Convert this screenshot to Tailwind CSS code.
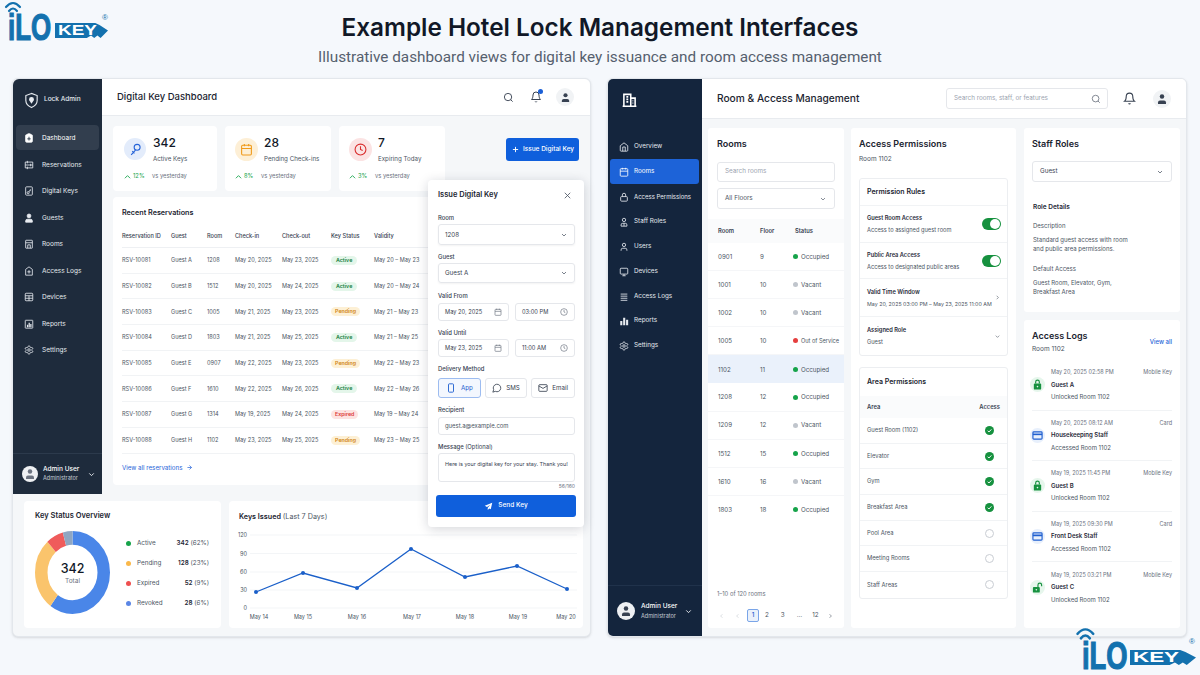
<!DOCTYPE html>
<html lang="en"><head><meta charset="utf-8"><title>Example Hotel Lock Management Interfaces</title>
<script src="https://cdn.jsdelivr.net/npm/@tailwindcss/browser@4"></script></head>
<body class="font-[Inter,sans-serif]">
<svg width="0" height="0" class="absolute"><defs>
<symbol id="search" viewBox="0 0 24 24"><circle cx="11" cy="11" r="8"/><path d="m21 21-4.3-4.3"/></symbol>
<symbol id="bell" viewBox="0 0 24 24"><path d="M6 8a6 6 0 0 1 12 0c0 7 3 9 3 9H3s3-2 3-9"/><path d="M10.3 21a1.94 1.94 0 0 0 3.4 0"/></symbol>
<symbol id="user" viewBox="0 0 24 24"><path d="M19 21v-2a4 4 0 0 0-4-4H9a4 4 0 0 0-4 4v2"/><circle cx="12" cy="7" r="4"/></symbol>
<symbol id="userfill" viewBox="0 0 24 24"><path fill="currentColor" d="M20 22v-3a4 4 0 0 0-4-4H8a4 4 0 0 0-4 4v3z"/><circle fill="currentColor" cx="12" cy="7" r="4.500"/></symbol>
<symbol id="users" viewBox="0 0 24 24"><circle cx="12" cy="7" r="4"/><path d="M5 22v-3a4 4 0 0 1 4-4h6a4 4 0 0 1 4 4v3zM12 15v7"/></symbol>
<symbol id="down" viewBox="0 0 24 24"><path d="m6 9 6 6 6-6"/></symbol>
<symbol id="right" viewBox="0 0 24 24"><path d="m9 18 6-6-6-6"/></symbol>
<symbol id="left" viewBox="0 0 24 24"><path d="m15 18-6-6 6-6"/></symbol>
<symbol id="cal" viewBox="0 0 24 24"><rect x="3" y="4" width="18" height="18" rx="2"/><path d="M16 2v4M8 2v4M3 10h18"/></symbol>
<symbol id="calrows" viewBox="0 0 24 24"><path d="M3 5h18M3 12h18M3 19h18M8 2v6M16 9v6M8 16v6M3 5v14M21 5v14"/></symbol>
<symbol id="clock" viewBox="0 0 24 24"><circle cx="12" cy="12" r="10"/><path d="M12 6v6l4 2"/></symbol>
<symbol id="home" viewBox="0 0 24 24"><path d="m3 9 9-7 9 7v11a2 2 0 0 1-2 2H5a2 2 0 0 1-2-2z"/><path d="M9 22V12h6v10"/></symbol>
<symbol id="clip" viewBox="0 0 24 24"><rect x="4" y="4" width="16" height="18" rx="2" fill="currentColor"/><path d="M9 2h6v4H9z" fill="currentColor"/><path stroke="#1e2b3c" d="M12 9v9M8 14h8"/></symbol>
<symbol id="keyup" viewBox="0 0 24 24"><circle cx="15" cy="8" r="5.500"/><path d="M12 13 4 22M6 15l4 4"/></symbol>
<symbol id="keycard" viewBox="0 0 24 24"><rect x="4" y="2" width="16" height="20" rx="2"/><circle cx="10" cy="16" r="2.500"/><path d="m12 14 4-6M14 10l2 1.500"/></symbol>
<symbol id="door" viewBox="0 0 24 24"><rect x="4" y="3" width="16" height="19" rx="1"/><path d="M4 9h16M9 22v-8h6v8"/></symbol>
<symbol id="shieldstar" viewBox="0 0 24 24"><path d="M12 2 4 8v14h16V8z"/><path d="M12 10v8M8 14h8"/></symbol>
<symbol id="grid" viewBox="0 0 24 24"><rect x="3" y="3" width="18" height="18" rx="2"/><path d="M3 9h18M3 15h18M12 9v12"/></symbol>
<symbol id="log" viewBox="0 0 24 24"><path d="M4 5h16M4 10h16M4 15h16M4 20h16"/></symbol>
<symbol id="device" viewBox="0 0 24 24"><rect x="3" y="3" width="18" height="14" rx="2"/><path d="M12 17v4M8 21h8"/></symbol>
<symbol id="bars" viewBox="0 0 24 24"><path stroke="none" fill="currentColor" d="M3 12h5v10H3zM10 4h5v18h-5zM17 9h5v13h-5z"/></symbol>
<symbol id="reportbox" viewBox="0 0 24 24"><rect x="3" y="3" width="18" height="19" rx="1"/><path stroke="none" fill="currentColor" d="M7 14h3v6H7zM11 9h3v11h-3zM15 12h3v8h-3z"/></symbol>
<symbol id="gear" viewBox="0 0 24 24"><path d="M12.22 2h-.44a2 2 0 0 0-2 2v.18a2 2 0 0 1-1 1.73l-.43.25a2 2 0 0 1-2 0l-.15-.08a2 2 0 0 0-2.73.73l-.22.38a2 2 0 0 0 .73 2.73l.15.1a2 2 0 0 1 1 1.72v.51a2 2 0 0 1-1 1.74l-.15.09a2 2 0 0 0-.73 2.73l.22.38a2 2 0 0 0 2.73.73l.15-.08a2 2 0 0 1 2 0l.43.25a2 2 0 0 1 1 1.73V20a2 2 0 0 0 2 2h.44a2 2 0 0 0 2-2v-.18a2 2 0 0 1 1-1.73l.43-.25a2 2 0 0 1 2 0l.15.08a2 2 0 0 0 2.73-.73l.22-.39a2 2 0 0 0-.73-2.73l-.15-.08a2 2 0 0 1-1-1.74v-.5a2 2 0 0 1 1-1.74l.15-.09a2 2 0 0 0 .73-2.73l-.22-.38a2 2 0 0 0-2.73-.73l-.15.08a2 2 0 0 1-2 0l-.43-.25a2 2 0 0 1-1-1.73V4a2 2 0 0 0-2-2z"/><circle cx="12" cy="12" r="3"/></symbol>
<symbol id="lock" viewBox="0 0 24 24"><rect x="4" y="11" width="16" height="11" rx="2"/><path d="M8 11V7a4 4 0 0 1 8 0v4"/></symbol>
<symbol id="lockfill" viewBox="0 0 24 24"><rect x="4" y="10" width="16" height="13" rx="2" fill="currentColor"/><path d="M8 10V6.500a4 4 0 0 1 8 0V10" fill="none" stroke="currentColor" stroke-width="2.500"/><circle cx="12" cy="16.500" r="1.800" fill="#e6f6ec"/></symbol>
<symbol id="lockopen" viewBox="0 0 24 24"><rect x="2" y="11" width="15" height="12" rx="2" fill="currentColor"/><path d="M13 11V6.500a4 4 0 0 1 8 0V9" fill="none" stroke="currentColor" stroke-width="2.500"/><circle cx="9.500" cy="17" r="1.800" fill="#e6f6ec"/></symbol>
<symbol id="cardicon" viewBox="0 0 24 24"><rect x="2" y="4" width="20" height="16" rx="2" fill="none" stroke="currentColor" stroke-width="2.500"/><path d="M2 9.500h20" stroke="currentColor" stroke-width="3.500"/></symbol>
<symbol id="shield" viewBox="0 0 24 24"><path d="M12 2 4 5v7c0 5 3.500 8 8 10 4.500-2 8-5 8-10V5z"/><path fill="currentColor" stroke="none" d="M12 7a3.500 3.500 0 0 0-3.500 3.500c0 2 2 3 3.500 6 1.500-3 3.500-4 3.500-6A3.500 3.500 0 0 0 12 7z"/></symbol>
<symbol id="trend" viewBox="0 0 24 24"><path d="M3 18 12 9l9 9"/></symbol>
<symbol id="x" viewBox="0 0 24 24"><path d="M18 6 6 18M6 6l12 12"/></symbol>
<symbol id="phone" viewBox="0 0 24 24"><rect x="6" y="2" width="12" height="20" rx="2"/></symbol>
<symbol id="msg" viewBox="0 0 24 24"><path d="M7.900 20A9 9 0 1 0 4 16.100L2 22z"/></symbol>
<symbol id="mail" viewBox="0 0 24 24"><rect x="2" y="4" width="20" height="16" rx="2"/><path d="m22 7-10 6L2 7"/></symbol>
<symbol id="check" viewBox="0 0 24 24"><path d="m7 12.500 3.500 3.500L17 9"/></symbol>
</defs></svg>

<div class="relative w-[1200px] h-[675px] overflow-hidden bg-[#f5f8fc]">

  <header class="h-[78px] flex flex-col items-center">
    <h1 class="mt-[11px] text-[24.300px] leading-[32px] font-semibold text-[#111827]">Example Hotel Lock Management Interfaces</h1>
    <p class="mt-[2px] font-[Roboto,sans-serif] text-[15.300px] leading-[24px] text-[#55606e]">Illustrative dashboard views for digital key issuance and room access management</p>
  </header>

  <!-- top logo -->
  <div class="absolute left-[3px] top-0 w-[112px] h-[44px] font-['Liberation_Sans'] font-bold text-[#1371ae]">
    <svg class="absolute left-0 top-0 w-[22px] h-[16px]" viewBox="0 0 22 16" fill="none" stroke="#1371ae" stroke-width="2.200" stroke-linecap="round"><path d="M3 7Q10-1 17 7"/><path d="M6 11Q10 6 14 11"/></svg>
    <div class="flex items-start pl-[5px] pt-[10px]">
      <div class="w-[47px] h-[36px]"><span class="block w-[66px] text-[36px] leading-[36px] origin-left scale-x-[0.72] [-webkit-text-stroke:1.200px_#1371ae]">iLO</span></div>
      <div class="mt-[13px] w-[53px] h-[15px] bg-[#1371ae] [clip-path:polygon(0_0,76%_0,84%_14%,100%_50%,86%_100%,80%_84%,74%_100%,68%_84%,60%_100%,0_100%)] text-white text-[14px] leading-[15px] pl-[3px]"><span class="inline-block origin-left scale-x-[1.35]">KEY</span></div>
    </div>
    <span class="absolute left-[99px] top-[14px] text-[8px] font-normal leading-[8px]">®</span>
  </div>

  <main class="flex gap-[16px] pl-[12px] h-[559px]">

    <!-- LEFT PANEL -->
    <section class="relative w-[579px] h-[559px] flex flex-col rounded-[6px] bg-[#f5f7f9] border border-[#e3e7ec] shadow-sm">
      <div class="flex h-[415px]">
        <aside class="w-[89px] h-[415px] bg-[#1e2b3c] rounded-tl-[6px] text-[#e7ebf0] flex flex-col">
          <div class="h-[42px] flex items-center pl-[10px] gap-[4px]">
            <svg class="w-[17px] h-[19px]" fill="none" stroke="#e7ebf0" stroke-width="1.600"><use href="#shield"/></svg>
            <span class="text-[6.500px] font-medium">Lock Admin</span>
          </div>
          <nav class="mt-[4px] flex flex-col gap-[1.500px] text-[6.500px] leading-[12px]">
            <a class="mx-[3px] h-[25px] flex items-center gap-[8px] pl-[8px] pt-[1px] rounded-[4px] bg-[#323e4e] text-white"><svg class="w-[10px] h-[10px]" fill="none" stroke="currentColor" stroke-width="2"><use href="#clip"/></svg>Dashboard</a>
            <a class="mx-[3px] h-[25px] flex items-center gap-[8px] pl-[8px] pt-[1px]"><svg class="w-[10px] h-[10px]" fill="none" stroke="currentColor" stroke-width="2"><use href="#calrows"/></svg>Reservations</a>
            <a class="mx-[3px] h-[25px] flex items-center gap-[8px] pl-[8px] pt-[1px]"><svg class="w-[10px] h-[10px]" fill="none" stroke="currentColor" stroke-width="2"><use href="#keycard"/></svg>Digital Keys</a>
            <a class="mx-[3px] h-[25px] flex items-center gap-[8px] pl-[8px] pt-[1px]"><svg class="w-[10px] h-[10px]" fill="none" stroke="currentColor" stroke-width="2"><use href="#userfill"/></svg>Guests</a>
            <a class="mx-[3px] h-[25px] flex items-center gap-[8px] pl-[8px] pt-[1px]"><svg class="w-[10px] h-[10px]" fill="none" stroke="currentColor" stroke-width="2"><use href="#door"/></svg>Rooms</a>
            <a class="mx-[3px] h-[25px] flex items-center gap-[8px] pl-[8px] pt-[1px]"><svg class="w-[10px] h-[10px]" fill="none" stroke="currentColor" stroke-width="2"><use href="#shieldstar"/></svg>Access Logs</a>
            <a class="mx-[3px] h-[25px] flex items-center gap-[8px] pl-[8px] pt-[1px]"><svg class="w-[10px] h-[10px]" fill="none" stroke="currentColor" stroke-width="2"><use href="#grid"/></svg>Devices</a>
            <a class="mx-[3px] h-[25px] flex items-center gap-[8px] pl-[8px] pt-[1px]"><svg class="w-[10px] h-[10px]" fill="none" stroke="currentColor" stroke-width="2"><use href="#reportbox"/></svg>Reports</a>
            <a class="mx-[3px] h-[25px] flex items-center gap-[8px] pl-[8px] pt-[1px]"><svg class="w-[10px] h-[10px]" fill="none" stroke="currentColor" stroke-width="2"><use href="#gear"/></svg>Settings</a>
          </nav>
          <div class="mt-auto h-[41px] border-t border-[#2c3a4c] flex items-center pl-[9px]">
            <div class="w-[16px] h-[16px] rounded-full bg-[#eef0f3] flex items-center justify-center text-[#6b7280]"><svg class="w-[12px] h-[12px]"><use href="#userfill"/></svg></div>
            <div class="ml-[5px] leading-[9px]"><div class="text-[6.500px] font-medium text-white">Admin User</div><div class="text-[5.500px] text-[#c4cbd4]">Administrator</div></div>
            <svg class="ml-[8px] w-[9px] h-[9px]" fill="none" stroke="currentColor" stroke-width="2.500"><use href="#down"/></svg>
          </div>
        </aside>

        <div class="flex-1 flex flex-col min-w-0">
          <div class="h-[37px] bg-white border-b border-[#e8ebef] flex items-center pl-[15px] pr-[16px] rounded-tr-[6px]">
            <h2 class="text-[9.500px] font-medium text-[#1b2430]">Digital Key Dashboard</h2>
            <svg class="ml-auto w-[11px] h-[11px] text-[#374151]" fill="none" stroke="currentColor" stroke-width="2"><use href="#search"/></svg>
            <span class="relative ml-[16px]"><svg class="block w-[12px] h-[12px] text-[#374151]" fill="none" stroke="currentColor" stroke-width="2"><use href="#bell"/></svg><i class="absolute right-[-1px] top-[-2px] w-[5px] h-[5px] rounded-full bg-[#1a5fd6]"></i></span>
            <span class="ml-[14px] w-[18px] h-[18px] rounded-full bg-[#f1f3f5] flex items-center justify-center"><svg class="w-[11px] h-[11px] text-[#374151]"><use href="#userfill"/></svg></span>
          </div>
          <div class="pl-[11px] pr-[11px] pt-[10px]">
            <div class="flex gap-[8px] h-[65px]">
              <div class="w-[104px] bg-white rounded-[4px] pl-[11px] pt-[10px]">
                <div class="flex items-center"><span class="w-[22px] h-[22px] rounded-full bg-[#e3ecfb] flex items-center justify-center text-[#2563d8]"><svg class="w-[13px] h-[13px]" fill="none" stroke="currentColor" stroke-width="2"><use href="#keyup"/></svg></span>
                  <div class="ml-[7px] leading-none"><div class="text-[12px] font-medium text-[#111827] leading-[14px]">342</div><div class="text-[6.200px] text-[#4b5563] mt-[6px]">Active Keys</div></div></div>
                <div class="mt-[10px] flex items-center text-[5.800px] text-[#6b7280]"><svg class="w-[7px] h-[7px] text-[#16a34a]" fill="none" stroke="currentColor" stroke-width="3"><use href="#trend"/></svg><span class="ml-[2px] text-[#16a34a] w-[19px]">12%</span>vs yesterday</div>
              </div>
              <div class="w-[106px] bg-white rounded-[4px] pl-[10px] pt-[10px]">
                <div class="flex items-center"><span class="w-[23px] h-[23px] rounded-full bg-[#fdefd6] flex items-center justify-center text-[#ef9a1a]"><svg class="w-[13px] h-[13px]" fill="none" stroke="currentColor" stroke-width="2"><use href="#cal"/></svg></span>
                  <div class="ml-[6px] leading-none"><div class="text-[12px] font-medium text-[#111827] leading-[14px]">28</div><div class="text-[6.200px] text-[#4b5563] mt-[6px]">Pending Check-ins</div></div></div>
                <div class="mt-[10px] flex items-center text-[5.800px] text-[#6b7280]"><svg class="w-[7px] h-[7px] text-[#16a34a]" fill="none" stroke="currentColor" stroke-width="3"><use href="#trend"/></svg><span class="ml-[2px] text-[#16a34a] w-[17px]">8%</span>vs yesterday</div>
              </div>
              <div class="w-[106px] bg-white rounded-[4px] pl-[10px] pt-[10px]">
                <div class="flex items-center"><span class="w-[23px] h-[23px] rounded-full bg-[#fbe3e3] flex items-center justify-center text-[#d92d2d]"><svg class="w-[13px] h-[13px]" fill="none" stroke="currentColor" stroke-width="2"><use href="#clock"/></svg></span>
                  <div class="ml-[6px] leading-none"><div class="text-[12px] font-medium text-[#111827] leading-[14px]">7</div><div class="text-[6.200px] text-[#4b5563] mt-[6px]">Expiring Today</div></div></div>
                <div class="mt-[10px] flex items-center text-[5.800px] text-[#6b7280]"><svg class="w-[7px] h-[7px] text-[#16a34a]" fill="none" stroke="currentColor" stroke-width="3"><use href="#trend"/></svg><span class="ml-[2px] text-[#16a34a] w-[17px]">3%</span>vs yesterday</div>
              </div>
              <button class="ml-auto mt-[12px] w-[73px] h-[23px] rounded-[3px] bg-[#0f5fdc] text-white text-[6.500px] font-medium flex items-center justify-center gap-[3px]"><svg class="w-[9px] h-[9px]" fill="none" stroke="currentColor" stroke-width="2.500"><path d="M12 5v14M5 12h14" transform="scale(.375)"/></svg>Issue Digital Key</button>
            </div>

            <div class="mt-[6px] h-[288px] w-[467px] bg-white rounded-[4px] pl-[9px] pr-[9px]">
              <h3 class="pt-[11px] h-[29px] text-[7.200px] font-semibold text-[#1b2430]">Recent Reservations</h3>
              <div class="text-[5.600px] text-[#4b5563]">
                <div class="grid grid-cols-[49px_36px_28px_47px_49px_43px_1fr] items-center h-[22px] border-b border-[#eef0f3] font-medium text-[#374151]"><span>Reservation ID</span><span>Guest</span><span>Room</span><span>Check-in</span><span>Check-out</span><span>Key Status</span><span>Validity</span></div>
                <div class="grid grid-cols-[49px_36px_28px_47px_49px_43px_1fr] items-center h-[25.700px] border-b border-[#f1f3f5]"><span>RSV-10081</span><span>Guest A</span><span>1208</span><span>May 20, 2025</span><span>May 23, 2025</span><span><b class="inline-block px-[5px] leading-[9px] rounded-full bg-[#e4f6ea] text-[#15803d] font-semibold text-[5.300px]">Active</b></span><span>May 20 – May 23</span></div>
                <div class="grid grid-cols-[49px_36px_28px_47px_49px_43px_1fr] items-center h-[25.700px] border-b border-[#f1f3f5]"><span>RSV-10082</span><span>Guest B</span><span>1512</span><span>May 20, 2025</span><span>May 24, 2025</span><span><b class="inline-block px-[5px] leading-[9px] rounded-full bg-[#e4f6ea] text-[#15803d] font-semibold text-[5.300px]">Active</b></span><span>May 20 – May 24</span></div>
                <div class="grid grid-cols-[49px_36px_28px_47px_49px_43px_1fr] items-center h-[25.700px] border-b border-[#f1f3f5]"><span>RSV-10083</span><span>Guest C</span><span>1005</span><span>May 21, 2025</span><span>May 23, 2025</span><span><b class="inline-block px-[4px] leading-[9px] rounded-full bg-[#fdf0d5] text-[#d08414] font-semibold text-[5.300px]">Pending</b></span><span>May 21 – May 23</span></div>
                <div class="grid grid-cols-[49px_36px_28px_47px_49px_43px_1fr] items-center h-[25.700px] border-b border-[#f1f3f5]"><span>RSV-10084</span><span>Guest D</span><span>1803</span><span>May 21, 2025</span><span>May 25, 2025</span><span><b class="inline-block px-[5px] leading-[9px] rounded-full bg-[#e4f6ea] text-[#15803d] font-semibold text-[5.300px]">Active</b></span><span>May 21 – May 25</span></div>
                <div class="grid grid-cols-[49px_36px_28px_47px_49px_43px_1fr] items-center h-[25.700px] border-b border-[#f1f3f5]"><span>RSV-10085</span><span>Guest E</span><span>0907</span><span>May 22, 2025</span><span>May 23, 2025</span><span><b class="inline-block px-[4px] leading-[9px] rounded-full bg-[#fdf0d5] text-[#d08414] font-semibold text-[5.300px]">Pending</b></span><span>May 22 – May 23</span></div>
                <div class="grid grid-cols-[49px_36px_28px_47px_49px_43px_1fr] items-center h-[25.700px] border-b border-[#f1f3f5]"><span>RSV-10086</span><span>Guest F</span><span>1610</span><span>May 22, 2025</span><span>May 26, 2025</span><span><b class="inline-block px-[5px] leading-[9px] rounded-full bg-[#e4f6ea] text-[#15803d] font-semibold text-[5.300px]">Active</b></span><span>May 22 – May 26</span></div>
                <div class="grid grid-cols-[49px_36px_28px_47px_49px_43px_1fr] items-center h-[25.700px] border-b border-[#f1f3f5]"><span>RSV-10087</span><span>Guest G</span><span>1314</span><span>May 19, 2025</span><span>May 24, 2025</span><span><b class="inline-block px-[4px] leading-[9px] rounded-full bg-[#fde3e1] text-[#dc3b3b] font-semibold text-[5.300px]">Expired</b></span><span>May 19 – May 24</span></div>
                <div class="grid grid-cols-[49px_36px_28px_47px_49px_43px_1fr] items-center h-[25.700px] border-b border-[#f1f3f5]"><span>RSV-10088</span><span>Guest H</span><span>1102</span><span>May 23, 2025</span><span>May 25, 2025</span><span><b class="inline-block px-[4px] leading-[9px] rounded-full bg-[#fdf0d5] text-[#d08414] font-semibold text-[5.300px]">Pending</b></span><span>May 23 – May 25</span></div>
              </div>
              <a class="mt-[9px] flex items-center gap-[3px] text-[6.200px] text-[#2563d8]">View all reservations <svg class="w-[7px] h-[7px]" fill="none" stroke="currentColor" stroke-width="2.500"><path d="M5 12h14M12 5l7 7-7 7" transform="scale(.29)"/></svg></a>
            </div>
          </div>
        </div>
      </div>

      <div class="flex gap-[8px] pl-[11px] pt-[7px]">
        <div class="relative w-[197px] h-[127px] bg-white rounded-[4px] pl-[11px] pt-[10px]">
          <h3 class="text-[7.500px] leading-[10px] font-semibold text-[#1b2430]">Key Status Overview</h3>
          <div class="mt-[10px] flex">
            <div class="relative w-[75px] h-[83px]">
              <svg class="w-[75px] h-[83px]" viewBox="3 3 78 78" preserveAspectRatio="none" fill="none" stroke-width="13"><g transform="rotate(-90 42 42)"><circle cx="42" cy="42" r="32.500" stroke="#4a86e8" pathLength="360" stroke-dasharray="216 360"/><circle cx="42" cy="42" r="32.500" stroke="#fac46c" pathLength="360" stroke-dasharray="102 360" stroke-dashoffset="-216"/><circle cx="42" cy="42" r="32.500" stroke="#ef5b5b" pathLength="360" stroke-dasharray="27 360" stroke-dashoffset="-318"/><circle cx="42" cy="42" r="32.500" stroke="#8fa6c2" pathLength="360" stroke-dasharray="15 360" stroke-dashoffset="-345"/></g></svg>
              <div class="absolute left-0 top-0 w-[75px] h-[83px] flex flex-col items-center justify-center"><span class="text-[12.500px] leading-[17px] font-medium text-[#111827]">342</span><span class="text-[6.500px] leading-[9px] text-[#6b7280]">Total</span></div>
            </div>
            <div class="ml-[16px] w-[83px] pt-[8px] text-[6.300px] text-[#4b5563] flex flex-col gap-[11px]">
              <div class="flex items-center h-[9px]"><i class="w-[5px] h-[5px] rounded-full bg-[#16a34a] mr-[6px]"></i>Active<span class="ml-auto"><b class="font-semibold text-[#1f2937]">342</b> (62%)</span></div>
              <div class="flex items-center h-[9px]"><i class="w-[5px] h-[5px] rounded-full bg-[#fab84a] mr-[6px]"></i>Pending<span class="ml-auto"><b class="font-semibold text-[#1f2937]">128</b> (23%)</span></div>
              <div class="flex items-center h-[9px]"><i class="w-[5px] h-[5px] rounded-full bg-[#ef4f4f] mr-[6px]"></i>Expired<span class="ml-auto"><b class="font-semibold text-[#1f2937]">52</b> (9%)</span></div>
              <div class="flex items-center h-[9px]"><i class="w-[5px] h-[5px] rounded-full bg-[#5b86e5] mr-[6px]"></i>Revoked<span class="ml-auto"><b class="font-semibold text-[#1f2937]">28</b> (6%)</span></div>
            </div>
          </div>
        </div>
        <div class="w-[354px] h-[127px] bg-white rounded-[4px] pl-[10px] pt-[10px]">
          <h3 class="text-[7.200px] leading-[11px] font-semibold text-[#1b2430]">Keys Issued <span class="font-normal text-[#4b5563]">(Last 7 Days)</span></h3>
          <svg class="-ml-[10px] block" width="354" height="104" viewBox="228 522 354 104" font-size="5.500" fill="#4b5563" font-family="Inter">
            <g stroke="#eef0f3" stroke-width=".7"><path d="M249 535H576M249 553.500H576M249 572H576M249 590H576M249 608H576"/></g>
            <g text-anchor="end"><text x="246" y="537">120</text><text x="246" y="555.500">90</text><text x="246" y="574">60</text><text x="246" y="592">30</text><text x="246" y="610">0</text></g>
            <g text-anchor="middle"><text x="258" y="619">May 14</text><text x="302" y="619">May 15</text><text x="356" y="619">May 16</text><text x="411" y="619">May 17</text><text x="464" y="619">May 18</text><text x="517" y="619">May 19</text><text x="565" y="619">May 20</text></g>
            <polyline points="255,592 302,573 356,588 410,549 464,577 516,566 566,589" fill="none" stroke="#1a5fc9" stroke-width="1.300"/>
            <g fill="#1a5fc9"><circle cx="255" cy="592" r="2"/><circle cx="302" cy="573" r="2"/><circle cx="356" cy="588" r="2"/><circle cx="410" cy="549" r="2"/><circle cx="464" cy="577" r="2"/><circle cx="516" cy="566" r="2"/><circle cx="566" cy="589" r="2"/></g>
          </svg>
        </div>
      </div>

      <!-- Issue Digital Key modal -->
      <div class="absolute left-[415px] top-[101px] w-[156px] h-[347px] bg-white rounded-[4px] shadow-[0_2px_12px_rgba(15,23,42,0.18)] pl-[10px] pr-[9px] pt-[9px] flex flex-col text-[5.900px] text-[#374151]">
        <div class="h-[12px] flex items-center justify-between pr-[2px]"><h3 class="text-[7.500px] font-semibold text-[#1b2430]">Issue Digital Key</h3><svg class="w-[11px] h-[11px] text-[#4b5563]" fill="none" stroke="currentColor" stroke-width="1.800"><use href="#x"/></svg></div>
        <label class="mt-[13px] h-[8px] leading-[8px] font-medium">Room</label>
        <div class="mt-[2px] h-[21px] border border-[#e5e7eb] rounded-[3px] shadow-xs flex items-center px-[6px] text-[6.200px]">1208<svg class="ml-auto w-[8px] h-[8px]" fill="none" stroke="currentColor" stroke-width="2"><use href="#down"/></svg></div>
        <label class="mt-[8px] h-[8px] leading-[8px] font-medium">Guest</label>
        <div class="mt-[2px] h-[20px] border border-[#e5e7eb] rounded-[3px] shadow-xs flex items-center px-[6px] text-[6.200px]">Guest A<svg class="ml-auto w-[8px] h-[8px]" fill="none" stroke="currentColor" stroke-width="2"><use href="#down"/></svg></div>
        <label class="mt-[9px] h-[8px] leading-[8px] font-medium">Valid From</label>
        <div class="mt-[3px] h-[18px] flex gap-[6px] text-[5.700px]"><div class="w-[71px] border border-[#e5e7eb] rounded-[3px] flex items-center px-[6px]">May 20, 2025<svg class="ml-auto w-[8px] h-[8px] text-[#6b7280]" fill="none" stroke="currentColor" stroke-width="2"><use href="#cal"/></svg></div><div class="w-[60px] border border-[#e5e7eb] rounded-[3px] flex items-center px-[6px]">03:00 PM<svg class="ml-auto w-[8px] h-[8px] text-[#6b7280]" fill="none" stroke="currentColor" stroke-width="2"><use href="#clock"/></svg></div></div>
        <label class="mt-[8px] h-[8px] leading-[8px] font-medium">Valid Until</label>
        <div class="mt-[2px] h-[18px] flex gap-[6px] text-[5.700px]"><div class="w-[71px] border border-[#e5e7eb] rounded-[3px] flex items-center px-[6px]">May 23, 2025<svg class="ml-auto w-[8px] h-[8px] text-[#6b7280]" fill="none" stroke="currentColor" stroke-width="2"><use href="#cal"/></svg></div><div class="w-[60px] border border-[#e5e7eb] rounded-[3px] flex items-center px-[6px]">11:00 AM<svg class="ml-auto w-[8px] h-[8px] text-[#6b7280]" fill="none" stroke="currentColor" stroke-width="2"><use href="#clock"/></svg></div></div>
        <label class="mt-[8px] h-[8px] leading-[8px] font-medium">Delivery Method</label>
        <div class="mt-[5px] h-[20px] flex gap-[4px] text-[6.200px]">
          <div class="w-[43px] border border-[#9dbcf0] bg-[#f3f7fe] rounded-[3px] flex items-center justify-center gap-[5px] text-[#1f5fd0]"><svg class="w-[10px] h-[10px]" fill="none" stroke="currentColor" stroke-width="2.200"><use href="#phone"/></svg>App</div>
          <div class="w-[43px] border border-[#e5e7eb] rounded-[3px] flex items-center justify-center gap-[4px]"><svg class="w-[10px] h-[10px]" fill="none" stroke="currentColor" stroke-width="2"><use href="#msg"/></svg>SMS</div>
          <div class="w-[44px] border border-[#e5e7eb] rounded-[3px] flex items-center justify-center gap-[4px]"><svg class="w-[10px] h-[10px]" fill="none" stroke="currentColor" stroke-width="2"><use href="#mail"/></svg>Email</div>
        </div>
        <label class="mt-[8px] h-[8px] leading-[8px] font-medium">Recipient</label>
        <div class="mt-[3px] h-[18px] border border-[#e5e7eb] rounded-[3px] flex items-center px-[6px] text-[#4b5563]">guest.a@example.com</div>
        <label class="mt-[8px] h-[8px] leading-[8px] font-medium">Message <span class="font-normal">(Optional)</span></label>
        <div class="mt-[2px] h-[29px] border border-[#e5e7eb] rounded-[3px] px-[6px] pt-[6px] text-[5.400px] whitespace-nowrap">Here is your digital key for your stay. Thank you!</div>
        <div class="h-[6px] leading-[6px] text-right text-[5px] text-[#6b7280] pt-[1px]">56/160</div>
        <button class="mt-[7px] -ml-[2px] w-[140px] h-[22px] rounded-[3px] bg-[#0f5fdc] text-white text-[6.500px] font-medium flex items-center justify-center gap-[5px]"><svg class="w-[9px] h-[9px]" viewBox="0 0 24 24" fill="currentColor"><path d="M22 2 2 10l6 3.500L17 7l-7 8v6l4-4 4 2.500z"/></svg>Send Key</button>
      </div>
    </section>

    <!-- RIGHT PANEL -->
    <section class="w-[580px] h-[559px] flex rounded-[6px] bg-[#f5f7f9] border border-[#e3e7ec] shadow-sm overflow-hidden">
      <aside class="w-[94px] bg-[#14253d] text-[#e7ebf0] flex flex-col shrink-0">
        <div class="h-[42px] flex items-center pl-[14px]"><svg class="w-[15px] h-[16px]" viewBox="0 0 24 24" fill="none" stroke="white" stroke-width="2.500"><path d="M3 22V3h11v19M14 9h7v13M1 22h22M7 7h3M7 11h3M7 15h3M17 13h1M17 17h1"/></svg></div>
        <nav class="mt-[13px] flex flex-col text-[6.300px] whitespace-nowrap">
          <a class="ml-[2px] mr-[3px] h-[25px] flex items-center gap-[5px] pl-[9px]"><svg class="w-[10px] h-[10px]" fill="none" stroke="currentColor" stroke-width="2"><use href="#home"/></svg>Overview</a>
          <a class="ml-[2px] mr-[3px] h-[25px] flex items-center gap-[5px] pl-[9px] rounded-[3px] bg-[#1d63d8] text-white"><svg class="w-[10px] h-[10px]" fill="none" stroke="currentColor" stroke-width="2"><use href="#cal"/></svg>Rooms</a>
          <a class="ml-[2px] mr-[3px] h-[25px] flex items-center gap-[5px] pl-[9px] text-[6px]"><svg class="w-[10px] h-[10px]" fill="none" stroke="currentColor" stroke-width="2"><use href="#lock"/></svg>Access Permissions</a>
          <a class="ml-[2px] mr-[3px] h-[25px] flex items-center gap-[5px] pl-[9px]"><svg class="w-[10px] h-[10px]" fill="none" stroke="currentColor" stroke-width="2"><use href="#users"/></svg>Staff Roles</a>
          <a class="ml-[2px] mr-[3px] h-[25px] flex items-center gap-[5px] pl-[9px]"><svg class="w-[10px] h-[10px]" fill="none" stroke="currentColor" stroke-width="2"><use href="#user"/></svg>Users</a>
          <a class="ml-[2px] mr-[3px] h-[25px] flex items-center gap-[5px] pl-[9px]"><svg class="w-[10px] h-[10px]" fill="none" stroke="currentColor" stroke-width="2"><use href="#device"/></svg>Devices</a>
          <a class="ml-[2px] mr-[3px] h-[25px] flex items-center gap-[5px] pl-[9px]"><svg class="w-[10px] h-[10px]" fill="none" stroke="currentColor" stroke-width="2"><use href="#log"/></svg>Access Logs</a>
          <a class="ml-[2px] mr-[3px] h-[24px] flex items-center gap-[5px] pl-[9px]"><svg class="w-[10px] h-[10px]" fill="none" stroke="currentColor" stroke-width="2"><use href="#bars"/></svg>Reports</a>
          <a class="ml-[2px] mr-[3px] h-[25px] flex items-center gap-[5px] pl-[9px]"><svg class="w-[10px] h-[10px]" fill="none" stroke="currentColor" stroke-width="2"><use href="#gear"/></svg>Settings</a>
        </nav>
        <div class="mt-auto h-[51px] border-t border-[#20324b] flex items-center pl-[9px]">
          <div class="w-[18px] h-[18px] rounded-full bg-[#eef0f3] flex items-center justify-center text-[#374151]"><svg class="w-[12px] h-[12px]"><use href="#userfill"/></svg></div>
          <div class="ml-[6px] leading-[10px]"><div class="text-[6.500px] font-medium text-white">Admin User</div><div class="text-[5.500px] text-[#c4cbd4]">Administrator</div></div>
          <svg class="ml-[7px] w-[9px] h-[9px]" fill="none" stroke="currentColor" stroke-width="2.500"><use href="#down"/></svg>
        </div>
      </aside>

      <div class="flex-1 flex flex-col min-w-0">
        <div class="h-[40px] bg-white border-b border-[#e8ebef] flex items-center pl-[15px] pr-[15px] shrink-0">
          <h2 class="text-[10.200px] font-medium text-[#1b2430]">Room &amp; Access Management</h2>
          <div class="ml-auto w-[162px] h-[21px] border border-[#e5e7eb] rounded-[3px] flex items-center pl-[7px] pr-[6px] text-[6.300px] text-[#9ca3af]">Search rooms, staff, or features<svg class="ml-auto w-[10px] h-[10px] text-[#6b7280]" fill="none" stroke="currentColor" stroke-width="2"><use href="#search"/></svg></div>
          <svg class="ml-[15px] w-[13px] h-[13px] text-[#374151]" fill="none" stroke="currentColor" stroke-width="2"><use href="#bell"/></svg>
          <span class="ml-[17px] w-[18px] h-[18px] rounded-full bg-[#f1f3f5] flex items-center justify-center"><svg class="w-[12px] h-[12px] text-[#374151]"><use href="#userfill"/></svg></span>
        </div>
        <div class="flex pl-[6px] pt-[9px] gap-[7px]">

          <div class="relative w-[136px] h-[500px] bg-white rounded-[3px]">
            <h3 class="pl-[9px] pt-[9px] h-[34px] text-[9px] leading-[14px] font-semibold text-[#1b2430]">Rooms</h3>
            <div class="mx-[9px] h-[20px] border border-[#e5e7eb] rounded-[3px] flex items-center px-[7px] text-[6.300px] text-[#9ca3af]">Search rooms</div>
            <div class="mt-[6px] mx-[9px] h-[21px] border border-[#e5e7eb] rounded-[3px] flex items-center px-[7px] text-[6.300px] text-[#4b5563]">All Floors<svg class="ml-auto w-[8px] h-[8px]" fill="none" stroke="currentColor" stroke-width="2"><use href="#down"/></svg></div>
            <div class="mt-[10px] h-[24px] bg-[#fafbfc] pl-[10px] grid grid-cols-[42px_35px_1fr] items-center text-[5.800px] font-semibold text-[#374151]"><span>Room</span><span>Floor</span><span>Status</span></div>
            <div class="text-[6.200px] text-[#4b5563]">
              <div class="pl-[10px] h-[28.100px] grid grid-cols-[42px_33px_1fr] items-center border-b border-[#f5f6f8]"><span>0901</span><span>9</span><span class="flex items-center gap-[3px]"><i class="w-[5px] h-[5px] rounded-full bg-[#16a34a]"></i>Occupied</span></div>
              <div class="pl-[10px] h-[28.100px] grid grid-cols-[42px_33px_1fr] items-center border-b border-[#f5f6f8]"><span>1001</span><span>10</span><span class="flex items-center gap-[3px]"><i class="w-[5px] h-[5px] rounded-full bg-[#c0c5cc]"></i>Vacant</span></div>
              <div class="pl-[10px] h-[28.100px] grid grid-cols-[42px_33px_1fr] items-center border-b border-[#f5f6f8]"><span>1002</span><span>10</span><span class="flex items-center gap-[3px]"><i class="w-[5px] h-[5px] rounded-full bg-[#c0c5cc]"></i>Vacant</span></div>
              <div class="pl-[10px] h-[28.100px] grid grid-cols-[42px_33px_1fr] items-center border-b border-[#f5f6f8]"><span>1005</span><span>10</span><span class="flex items-center gap-[3px] whitespace-nowrap text-[5.600px]"><i class="w-[5px] h-[5px] rounded-full bg-[#e53e3e]"></i>Out of Service</span></div>
              <div class="pl-[10px] h-[28.100px] grid grid-cols-[42px_33px_1fr] items-center bg-[#eaf1fb]"><span>1102</span><span>11</span><span class="flex items-center gap-[3px]"><i class="w-[5px] h-[5px] rounded-full bg-[#16a34a]"></i>Occupied</span></div>
              <div class="pl-[10px] h-[28.100px] grid grid-cols-[42px_33px_1fr] items-center border-b border-[#f5f6f8]"><span>1208</span><span>12</span><span class="flex items-center gap-[3px]"><i class="w-[5px] h-[5px] rounded-full bg-[#16a34a]"></i>Occupied</span></div>
              <div class="pl-[10px] h-[28.100px] grid grid-cols-[42px_33px_1fr] items-center border-b border-[#f5f6f8]"><span>1209</span><span>12</span><span class="flex items-center gap-[3px]"><i class="w-[5px] h-[5px] rounded-full bg-[#c0c5cc]"></i>Vacant</span></div>
              <div class="pl-[10px] h-[28.100px] grid grid-cols-[42px_33px_1fr] items-center border-b border-[#f5f6f8]"><span>1512</span><span>15</span><span class="flex items-center gap-[3px]"><i class="w-[5px] h-[5px] rounded-full bg-[#16a34a]"></i>Occupied</span></div>
              <div class="pl-[10px] h-[28.100px] grid grid-cols-[42px_33px_1fr] items-center border-b border-[#f5f6f8]"><span>1610</span><span>16</span><span class="flex items-center gap-[3px]"><i class="w-[5px] h-[5px] rounded-full bg-[#c0c5cc]"></i>Vacant</span></div>
              <div class="pl-[10px] h-[28.100px] grid grid-cols-[42px_33px_1fr] items-center"><span>1803</span><span>18</span><span class="flex items-center gap-[3px]"><i class="w-[5px] h-[5px] rounded-full bg-[#16a34a]"></i>Occupied</span></div>
            </div>
            <div class="absolute left-[9px] top-[462px] text-[5.800px] leading-[8px] text-[#6b7280]">1–10 of 120 rooms</div>
            <div class="absolute left-[9px] top-[481px] flex items-center text-[6.300px] text-[#4b5563]">
              <svg class="w-[7px] h-[8px] text-[#c0c5cc] ml-[1px]" fill="none" stroke="currentColor" stroke-width="2"><use href="#left"/></svg>
              <svg class="ml-[9px] w-[7px] h-[8px] text-[#c0c5cc]" fill="none" stroke="currentColor" stroke-width="2"><use href="#left"/></svg>
              <span class="ml-[6px] w-[12px] h-[13px] rounded-[2px] border border-[#7aa5e8] bg-[#eaf1fb] text-[#1f5fd0] font-medium flex items-center justify-center">1</span>
              <span class="ml-[6px]">2</span><span class="ml-[12px]">3</span><span class="ml-[12px]">…</span><span class="ml-[10px]">12</span>
              <svg class="ml-[8px] w-[7px] h-[8px]" fill="none" stroke="currentColor" stroke-width="2"><use href="#right"/></svg>
            </div>
          </div>

          <div class="w-[165px] h-[500px] bg-white rounded-[3px] px-[8px] pt-[9px]">
            <h3 class="h-[14px] text-[9px] leading-[14px] font-semibold text-[#1b2430]">Access Permissions</h3>
            <p class="mt-[3px] text-[6.500px] leading-[10px] text-[#4b5563]">Room 1102</p>
            <div class="mt-[14px] h-[178px] border border-[#eceef1] rounded-[3px] text-[#4b5563] text-[5.700px]">
              <h4 class="h-[27px] pl-[7px] flex items-center text-[7px] font-semibold text-[#1b2430] border-b border-[#f1f3f5]">Permission Rules</h4>
              <div class="h-[37px] pl-[7px] pr-[6px] flex items-center border-b border-[#f1f3f5]"><div class="leading-[12px]"><div class="font-semibold text-[#1f2937]">Guest Room Access</div><div>Access to assigned guest room</div></div><span class="ml-auto w-[19px] h-[12px] rounded-full bg-[#16913f] relative"><i class="absolute right-[1px] top-[1px] w-[10px] h-[10px] rounded-full bg-white"></i></span></div>
              <div class="h-[36px] pl-[7px] pr-[6px] flex items-center border-b border-[#f1f3f5]"><div class="leading-[12px]"><div class="font-semibold text-[#1f2937]">Public Area Access</div><div>Access to designated public areas</div></div><span class="ml-auto w-[19px] h-[12px] rounded-full bg-[#16913f] relative"><i class="absolute right-[1px] top-[1px] w-[10px] h-[10px] rounded-full bg-white"></i></span></div>
              <div class="h-[38px] pl-[7px] pr-[6px] flex items-center border-b border-[#f1f3f5]"><div class="leading-[12px] whitespace-nowrap"><div class="font-semibold text-[#1f2937]">Valid Time Window</div><div class="text-[5.300px]">May 20, 2025 03:00 PM – May 23, 2025 11:00 AM</div></div><svg class="ml-auto shrink-0 w-[7px] h-[7px]" fill="none" stroke="currentColor" stroke-width="2"><use href="#right"/></svg></div>
              <div class="h-[38px] pl-[7px] pr-[6px] flex items-center"><div class="leading-[12px]"><div class="font-semibold text-[#1f2937]">Assigned Role</div><div>Guest</div></div><svg class="ml-auto w-[7px] h-[7px]" fill="none" stroke="currentColor" stroke-width="2"><use href="#down"/></svg></div>
            </div>
            <div class="mt-[11px] border border-[#eceef1] rounded-[3px] text-[5.800px] text-[#4b5563]">
              <h4 class="h-[28px] pl-[7px] flex items-center text-[7px] font-semibold text-[#1b2430]">Area Permissions</h4>
              <div class="h-[22px] px-[7px] bg-[#fafbfc] flex items-center justify-between text-[5.800px] font-semibold text-[#374151]"><span>Area</span><span>Access</span></div>
              <div class="h-[25.700px] px-[7px] flex items-center justify-between border-b border-[#f1f3f5]">Guest Room (1102)<span class="mr-[6px] w-[9px] h-[9px] rounded-full bg-[#16913f] text-white"><svg class="w-[9px] h-[9px]" fill="none" stroke="currentColor" stroke-width="2.500"><use href="#check"/></svg></span></div>
              <div class="h-[25.700px] px-[7px] flex items-center justify-between border-b border-[#f1f3f5]">Elevator<span class="mr-[6px] w-[9px] h-[9px] rounded-full bg-[#16913f] text-white"><svg class="w-[9px] h-[9px]" fill="none" stroke="currentColor" stroke-width="2.500"><use href="#check"/></svg></span></div>
              <div class="h-[25.700px] px-[7px] flex items-center justify-between border-b border-[#f1f3f5]">Gym<span class="mr-[6px] w-[9px] h-[9px] rounded-full bg-[#16913f] text-white"><svg class="w-[9px] h-[9px]" fill="none" stroke="currentColor" stroke-width="2.500"><use href="#check"/></svg></span></div>
              <div class="h-[25.700px] px-[7px] flex items-center justify-between border-b border-[#f1f3f5]">Breakfast Area<span class="mr-[6px] w-[9px] h-[9px] rounded-full bg-[#16913f] text-white"><svg class="w-[9px] h-[9px]" fill="none" stroke="currentColor" stroke-width="2.500"><use href="#check"/></svg></span></div>
              <div class="h-[25.700px] px-[7px] flex items-center justify-between border-b border-[#f1f3f5]">Pool Area<span class="mr-[6px] w-[9px] h-[9px] rounded-full border border-[#c9cdd3]"></span></div>
              <div class="h-[25.700px] px-[7px] flex items-center justify-between border-b border-[#f1f3f5]">Meeting Rooms<span class="mr-[6px] w-[9px] h-[9px] rounded-full border border-[#c9cdd3]"></span></div>
              <div class="h-[25.700px] px-[7px] flex items-center justify-between">Staff Areas<span class="mr-[6px] w-[9px] h-[9px] rounded-full border border-[#c9cdd3]"></span></div>
            </div>
          </div>

          <div class="w-[156px] ml-px flex flex-col gap-[8px]">
            <div class="h-[184px] bg-white rounded-[3px] px-[8px] pt-[9px]">
              <h3 class="h-[14px] text-[9px] leading-[14px] font-semibold text-[#1b2430]">Staff Roles</h3>
              <div class="mt-[10px] w-[140px] h-[21px] border border-[#e5e7eb] rounded-[3px] flex items-center px-[7px] text-[6.300px] text-[#374151]">Guest<svg class="ml-auto w-[8px] h-[8px]" fill="none" stroke="currentColor" stroke-width="2"><use href="#down"/></svg></div>
              <h4 class="mt-[21px] pl-px text-[6.500px] leading-[9px] font-semibold text-[#1f2937]">Role Details</h4>
              <div class="mt-[9px] pl-px text-[6px] leading-[9px] text-[#4b5563]">Description<p class="mt-[5px]">Standard guest access with room<br>and public area permissions.</p></div>
              <div class="mt-[11px] pl-px text-[6px] leading-[9px] text-[#4b5563]">Default Access<p class="mt-[5px]">Guest Room, Elevator, Gym,<br>Breakfast Area</p></div>
            </div>
            <div class="h-[308px] bg-white rounded-[3px] px-[8px] pt-[9px]">
              <div class="flex"><div><h3 class="h-[14px] text-[9px] leading-[14px] font-semibold text-[#1b2430]">Access Logs</h3><p class="mt-px text-[6.500px] leading-[10px] text-[#4b5563]">Room 1102</p></div><a class="ml-auto mt-[8px] text-[6px] font-medium text-[#2563d8]">View all</a></div>
              <div class="mt-[6px] text-[6px] text-[#4b5563]">
                <div class="h-[50.500px] flex items-center border-b border-[#f1f3f5]"><span class="w-[15px] h-[15px] -ml-[2px] rounded-full bg-[#e6f6ec] flex items-center justify-center text-[#16913f]"><svg class="w-[11px] h-[11px]"><use href="#lockfill"/></svg></span><div class="ml-[6px] flex-1 leading-[12.500px]"><div class="flex justify-between text-[5.500px] text-[#6b7280]"><span>May 20, 2025 02:58 PM</span><span>Mobile Key</span></div><div class="font-semibold text-[#1f2937]">Guest A</div><div>Unlocked Room 1102</div></div></div>
                <div class="h-[50.500px] flex items-center border-b border-[#f1f3f5]"><span class="w-[15px] h-[15px] -ml-[2px] rounded-full bg-[#e8f0fc] flex items-center justify-center text-[#1f5fd0]"><svg class="w-[11px] h-[11px]"><use href="#cardicon"/></svg></span><div class="ml-[6px] flex-1 leading-[12.500px]"><div class="flex justify-between text-[5.500px] text-[#6b7280]"><span>May 20, 2025 08:12 AM</span><span>Card</span></div><div class="font-semibold text-[#1f2937]">Housekeeping Staff</div><div>Accessed Room 1102</div></div></div>
                <div class="h-[50.500px] flex items-center border-b border-[#f1f3f5]"><span class="w-[15px] h-[15px] -ml-[2px] rounded-full bg-[#e6f6ec] flex items-center justify-center text-[#16913f]"><svg class="w-[11px] h-[11px]"><use href="#lockfill"/></svg></span><div class="ml-[6px] flex-1 leading-[12.500px]"><div class="flex justify-between text-[5.500px] text-[#6b7280]"><span>May 19, 2025 11:45 PM</span><span>Mobile Key</span></div><div class="font-semibold text-[#1f2937]">Guest B</div><div>Unlocked Room 1102</div></div></div>
                <div class="h-[50.500px] flex items-center border-b border-[#f1f3f5]"><span class="w-[15px] h-[15px] -ml-[2px] rounded-full bg-[#e8f0fc] flex items-center justify-center text-[#1f5fd0]"><svg class="w-[11px] h-[11px]"><use href="#cardicon"/></svg></span><div class="ml-[6px] flex-1 leading-[12.500px]"><div class="flex justify-between text-[5.500px] text-[#6b7280]"><span>May 19, 2025 09:30 PM</span><span>Card</span></div><div class="font-semibold text-[#1f2937]">Front Desk Staff</div><div>Accessed Room 1102</div></div></div>
                <div class="h-[50.500px] flex items-center"><span class="w-[15px] h-[15px] -ml-[2px] rounded-full bg-[#e6f6ec] flex items-center justify-center text-[#16913f]"><svg class="w-[11px] h-[11px]"><use href="#lockopen"/></svg></span><div class="ml-[6px] flex-1 leading-[12.500px]"><div class="flex justify-between text-[5.500px] text-[#6b7280]"><span>May 19, 2025 03:21 PM</span><span>Mobile Key</span></div><div class="font-semibold text-[#1f2937]">Guest C</div><div>Unlocked Room 1102</div></div></div>
              </div>
            </div>
          </div>
        </div>
      </div>
    </section>
  </main>

  <!-- bottom logo -->
  <div class="absolute left-[1074px] top-[626px] w-[126px] h-[49px] font-['Liberation_Sans'] font-bold text-[#1371ae]">
    <svg class="absolute left-0 top-0 w-[25px] h-[18px]" viewBox="0 0 22 16" fill="none" stroke="#1371ae" stroke-width="2.200" stroke-linecap="round"><path d="M3 7Q10-1 17 7"/><path d="M6 11Q10 6 14 11"/></svg>
    <div class="flex items-start pl-[8px] pt-[11px]">
      <div class="w-[48px] h-[38px]"><span class="block w-[70px] text-[38px] leading-[38px] origin-left scale-x-[0.72] [-webkit-text-stroke:1.200px_#1371ae]">iLO</span></div>
      <div class="mt-[13px] w-[66px] h-[15px] bg-[#1371ae] [clip-path:polygon(0_0,76%_0,84%_14%,100%_50%,86%_100%,80%_84%,74%_100%,68%_84%,60%_100%,0_100%)] text-white text-[14px] leading-[15px] pl-[3px]"><span class="inline-block origin-left scale-x-[1.6]">KEY</span></div>
    </div>
    <span class="absolute left-[115px] top-[12px] text-[8px] font-normal leading-[8px]">®</span>
  </div>
</div>
</body></html>
